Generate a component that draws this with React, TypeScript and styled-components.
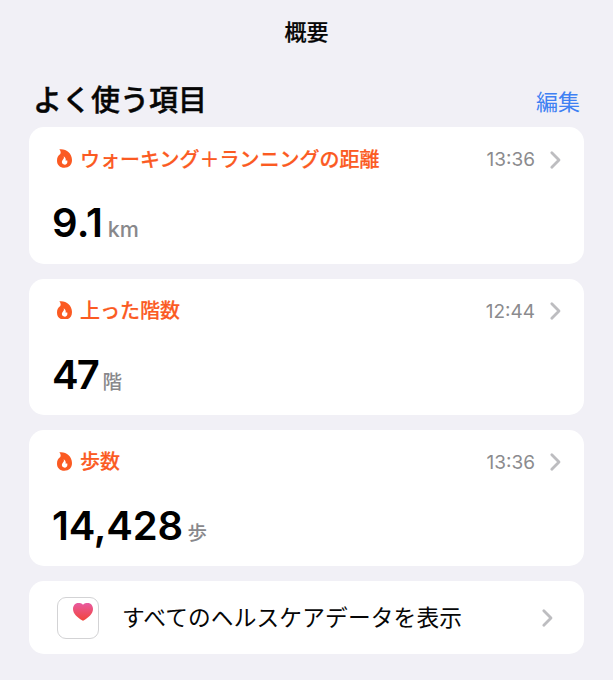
import styled, { createGlobalStyle } from 'styled-components'

type Metric = {
    label: string
    time: string
    value: string
    unit: string
    /** extra tracking for the big number */
    tracking?: number
}

const metrics: Metric[] = [
    { label: 'ウォーキング＋ランニングの距離', time: '13:36', value: '9.1', unit: 'km', tracking: 0.2 },
    { label: '上った階数', time: '12:44', value: '47', unit: '階', tracking: -1.8 },
    { label: '歩数', time: '13:36', value: '14,428', unit: '歩', tracking: -0.2 },
]

function Flame() {
    return (
        <FlameIcon viewBox="0 0 45 56">
            <path
                fillRule="evenodd"
                d="M7 1C26 -2 45 12 45 33C45 48 36 56 22 56C9 56 0 48 0 35C0 26 3 19 10 15C12 10 11 5 7 1ZM20 22C22 27 20 30 17 33C12 39 15 47 23 47C30 47 33 40 30 33C29 35 28 36 26 35C27 30 25 25 20 22Z"
            />
        </FlameIcon>
    )
}

function Chevron() {
    return (
        <ChevronIcon viewBox="0 0 12 20">
            <path d="M2.8 2.7L10 10L2.8 17.3" />
        </ChevronIcon>
    )
}

function Heart() {
    return (
        <HeartIcon viewBox="0 0 60 54">
            <defs>
                <linearGradient id="heart" x1="0" y1="0" x2="0" y2="1">
                    <stop offset="0" stopColor="#e85aa0" />
                    <stop offset="1" stopColor="#f2453a" />
                </linearGradient>
            </defs>
            <path
                fill="url(#heart)"
                d="M30 5C26 1 21 0 16 0C6 0 0 8 0 18C0 33 14 43 27 52Q30 54 33 52C46 43 60 33 60 18C60 8 54 0 44 0C39 0 34 1 30 5Z"
            />
        </HeartIcon>
    )
}

function MetricCard({ label, time, value, unit, tracking = 0 }: Metric) {
    return (
        <Card>
            <CardHeader>
                <Flame />
                <Label>{label}</Label>
                <Time>{time}</Time>
                <Chevron />
            </CardHeader>
            <Reading>
                <Value $tracking={tracking}>{value}</Value>
                <Unit $latin={unit === 'km'}>{unit}</Unit>
            </Reading>
        </Card>
    )
}

export default function App() {
    return (
        <Page>
            <GlobalStyle />
            <NavTitle>概要</NavTitle>
            <SectionHeader>
                <SectionTitle>よく使う項目</SectionTitle>
                <EditButton type="button">編集</EditButton>
            </SectionHeader>
            <CardList>
                {metrics.map((metric) => (
                    <MetricCard key={metric.label} {...metric} />
                ))}
                <AllDataRow>
                    <AppIcon>
                        <Heart />
                    </AppIcon>
                    <AllDataLabel>すべてのヘルスケアデータを表示</AllDataLabel>
                    <Chevron />
                </AllDataRow>
            </CardList>
        </Page>
    )
}

const GlobalStyle = createGlobalStyle`
  * {
    box-sizing: border-box;
  }

  body {
    margin: 0;
    background: #f1f0f6;
    color: #060606;
    font-family: Inter, 'Noto Sans CJK JP', sans-serif;
  }
`

const Page = styled.main`
  height: 680px;
  padding: 0 29px;
  overflow: hidden;
  background: #f1f0f6;
`

const NavTitle = styled.h1`
  margin: 0;
  height: 64px;
  font-size: 22px;
  font-weight: 500;
  line-height: 65px;
  text-align: center;
  -webkit-text-stroke: 0.2px;
`

const SectionHeader = styled.header`
  display: flex;
  justify-content: space-between;
  height: 63.3px;
  padding: 0 4px 0 4px;
`

const SectionTitle = styled.h2`
  margin: 0;
  font-size: 29px;
  font-weight: 500;
  line-height: 73px;
  -webkit-text-stroke: 0.4px;
`

const EditButton = styled.button`
  padding: 0;
  border: 0;
  background: none;
  color: #3f80f3;
  font-family: inherit;
  font-size: 22px;
  line-height: 76px;
`

const CardList = styled.section`
  display: flex;
  flex-direction: column;
  gap: 14.8px;
`

const Card = styled.article`
  height: 136.5px;
  padding: 17px 23px 0;
  border-radius: 15px;
  background: #fff;
`

const CardHeader = styled.div`
  display: flex;
  align-items: center;
  height: 31px;
  padding-left: 5px;
`

const FlameIcon = styled.svg`
  width: 15px;
  height: 18.7px;
  flex: none;
  margin-top: -2px;
  fill: #fb5a22;
`

const Label = styled.h3`
  flex: 1;
  margin: 0 0 0 8px;
  color: #fb5a22;
  font-size: 20px;
  font-weight: 500;
  line-height: 30px;
  white-space: nowrap;
  -webkit-text-stroke: 0.2px;
`

const Time = styled.time`
  margin-right: 14px;
  color: #8b8b8e;
  font-size: 19px;
`

const ChevronIcon = styled.svg`
  width: 12px;
  height: 20px;
  flex: none;
  fill: none;
  stroke: #bdbdc0;
  stroke-width: 2.8;
  stroke-linecap: round;
  stroke-linejoin: round;
`

const Reading = styled.div`
  display: flex;
  align-items: baseline;
  gap: 4.5px;
  line-height: 60px;
  margin-top: 18px;
`

const Value = styled.span<{ $tracking: number }>`
  color: #000;
  font-size: 40px;
  font-weight: 600;
  letter-spacing: ${({ $tracking }) => $tracking}px;
`

const Unit = styled.span<{ $latin: boolean }>`
  color: #88888b;
  font-size: ${({ $latin }) => ($latin ? 21.5 : 19.5)}px;
  font-weight: 500;
`

const AllDataRow = styled.article`
  display: flex;
  align-items: center;
  height: 73px;
  padding: 0 31px 0 28px;
  border-radius: 15px;
  background: #fff;
`

const AppIcon = styled.span`
  display: flex;
  justify-content: flex-end;
  width: 42px;
  height: 42px;
  padding: 5px 5px 0 0;
  border: 1px solid #d3d3d5;
  border-radius: 9px;
`

const HeartIcon = styled.svg`
  width: 20px;
  height: 18px;
`

const AllDataLabel = styled.span`
  flex: 1;
  margin: -2px 0 0 23px;
  font-size: 22.7px;
  letter-spacing: 0.15px;
`
